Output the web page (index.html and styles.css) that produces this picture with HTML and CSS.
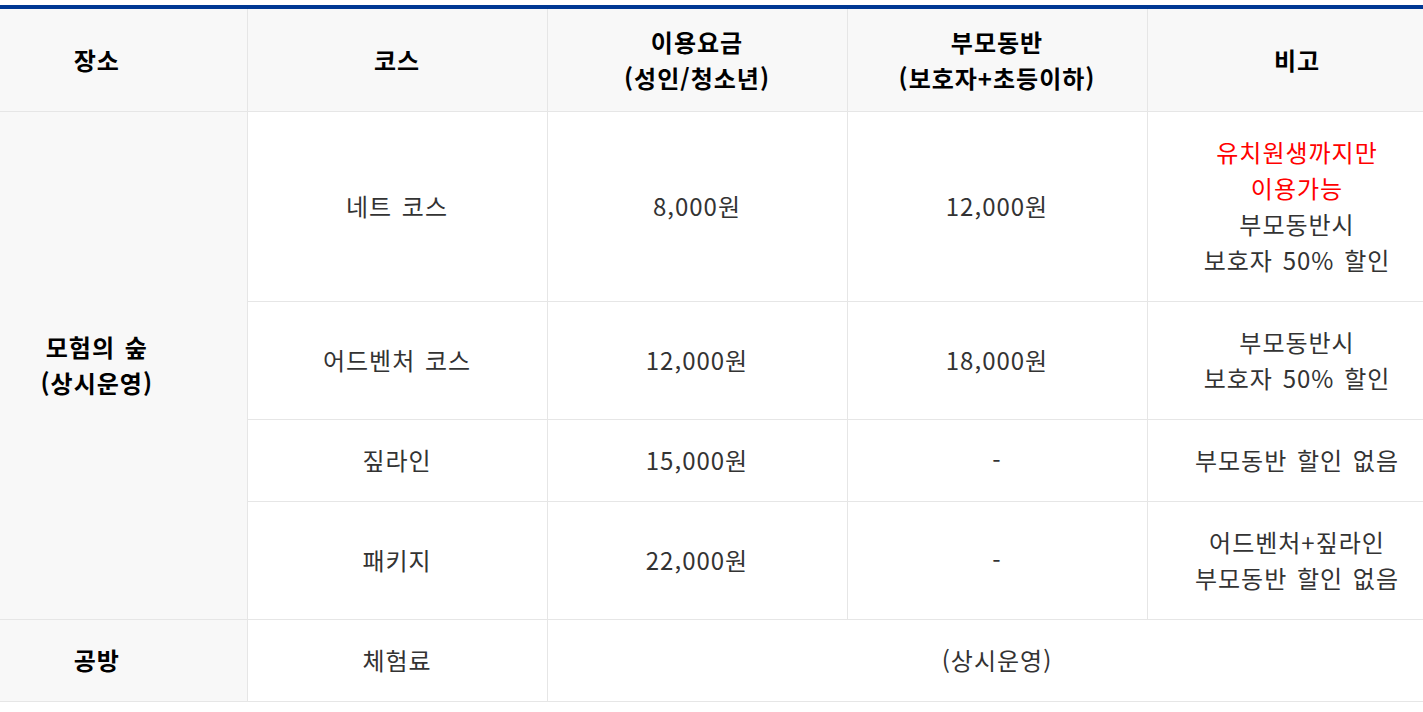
FILE: index.html
```html
<!DOCTYPE html>
<html lang="ko">
<head>
<meta charset="utf-8">
<title>이용요금</title>
<link rel="stylesheet" href="styles.css">
</head>
<body>
<div class="wrap">
<table class="fee">
  <colgroup>
    <col class="c-col">
    <col class="c-col">
    <col class="c-col">
    <col class="c-col">
    <col class="c-col">
  </colgroup>
  <thead>
    <tr>
      <th>장소</th>
      <th>코스</th>
      <th>이용요금<br>(성인/청소년)</th>
      <th>부모동반<br>(보호자+초등이하)</th>
      <th>비고</th>
    </tr>
  </thead>
  <tbody>
    <tr>
      <th rowspan="4" class="place">모험의 숲<br>(상시운영)</th>
      <td>네트 코스</td>
      <td>8,000원</td>
      <td>12,000원</td>
      <td><span class="red">유치원생까지만<br>이용가능</span><br>부모동반시<br>보호자 50% 할인</td>
    </tr>
    <tr>
      <td>어드벤처 코스</td>
      <td>12,000원</td>
      <td>18,000원</td>
      <td>부모동반시<br>보호자 50% 할인</td>
    </tr>
    <tr>
      <td>짚라인</td>
      <td>15,000원</td>
      <td>-</td>
      <td>부모동반 할인 없음</td>
    </tr>
    <tr>
      <td>패키지</td>
      <td>22,000원</td>
      <td>-</td>
      <td>어드벤처+짚라인<br>부모동반 할인 없음</td>
    </tr>
    <tr>
      <th class="place">공방</th>
      <td>체험료</td>
      <td colspan="3">(상시운영)</td>
    </tr>
  </tbody>
</table>
</div>
</body>
</html>
```
FILE: styles.css
```css
html, body {
  margin: 0;
  padding: 0;
  background: #fff;
  overflow: hidden;
}
.wrap {
  padding-top: 5px;
  margin-left: -53px;
  width: 1500px;
}
.fee {
  width: 1500px;
  table-layout: fixed;
  border-collapse: collapse;
  border-top: 4px solid #003893;
  font-family: "Noto Sans CJK KR", "Noto Sans", sans-serif;
  font-size: 24px;
  line-height: 36px;
  letter-spacing: 1px;
  word-spacing: 2px;
  color: #333;
  text-align: center;
}
.c-col { width: 300px; }
.fee th,
.fee td {
  border: 1px solid #e6e6e6;
  padding: 22px 8px 23px;
  vertical-align: middle;
}
.fee tr > :first-child { border-left: none; }
.fee thead th {
  background: #f8f8f8;
  color: #000;
  font-weight: 700;
  padding: 15px 8px;
  border-top: none;
}
.fee th.place {
  background: #f8f8f8;
  color: #000;
  font-weight: 700;
}
.red { color: #ff0000; }
```
